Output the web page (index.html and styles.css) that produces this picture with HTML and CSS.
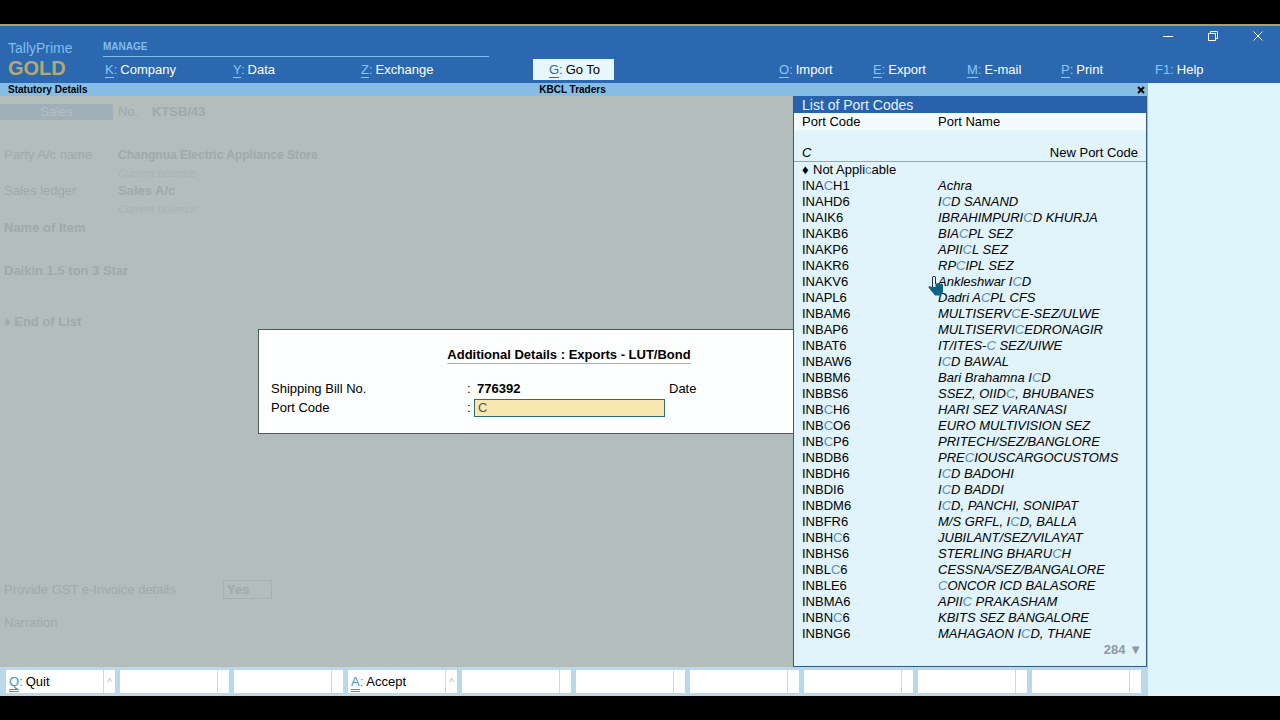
FILE: index.html
```html
<!DOCTYPE html>
<html lang="en">
<head>
    <meta charset="UTF-8">
    <meta name="viewport" content="width=device-width, initial-scale=1.0">
    <title>TallyPrime - Statutory Details</title>
    <link rel="stylesheet" href="styles.css">
</head>
<body>

<!-- Top Menu -->
<header class="top-bar">
    <div class="brand">
        <span class="brand-name">TallyPrime</span>
        <span class="brand-edition">GOLD</span>
    </div>
    <div class="manage">
        <span class="manage-title">MANAGE</span>
        <nav class="menu manage-menu">
            <a href="#"><b><u>K</u>:</b>Company</a>
            <a href="#"><b><u>Y</u>:</b>Data</a>
            <a href="#"><b><u>Z</u>:</b>Exchange</a>
        </nav>
    </div>
    <div class="goto">
        <button class="goto-button"><b><u>G</u>:</b>Go To</button>
    </div>
    <div class="tools">
        <div class="window-buttons">
            <button aria-label="Minimize"><svg width="12" height="12" viewBox="0 0 12 12"><path d="M1 6.5h10"/></svg></button>
            <button aria-label="Restore"><svg width="12" height="12" viewBox="0 0 12 12"><path d="M1.500 3.500h7v7h-7zM3.500 3.500v-2h7v7h-2"/></svg></button>
            <button aria-label="Close"><svg width="12" height="12" viewBox="0 0 12 12"><path d="M1.500 1.500l9 9M10.500 1.500l-9 9"/></svg></button>
        </div>
        <nav class="menu tools-menu">
            <a href="#"><b><u>O</u>:</b>Import</a>
            <a href="#"><b><u>E</u>:</b>Export</a>
            <a href="#"><b><u>M</u>:</b>E-mail</a>
            <a href="#"><b><u>P</u>:</b>Print</a>
            <a href="#"><b>F1:</b>Help</a>
        </nav>
    </div>
</header>

<div class="content">
    <main class="main">
        <!-- Title Strip -->
        <div class="title-strip">
            <span>Statutory Details</span>
            <span class="company">KBCL Traders</span>
            <button class="strip-close" aria-label="Close"><svg width="8" height="8" viewBox="0 0 8 8"><path d="M1 1l6 6M7 1l-6 6"/></svg></button>
        </div>

        <div class="workspace">
            <!-- Voucher behind the dialog -->
            <section class="voucher">
                <div class="voucher-head">
                    <span class="voucher-type">Sales</span>
                    <span class="voucher-no">No.</span>
                    <b>KTSB/43</b>
                </div>
                <div class="voucher-row party"><span>Party A/c name</span><b>Changnua Electric Appliance Store</b></div>
                <div class="voucher-row sub"><span></span><i>Current balance</i></div>
                <div class="voucher-row"><span>Sales ledger</span><b>Sales A/c</b></div>
                <div class="voucher-row sub"><span></span><i>Current balance</i></div>
                <b class="voucher-line">Name of Item</b>
                <b class="voucher-line item">Daikin 1.5 ton 3 Star</b>
                <b class="voucher-line end">&#9830; End of List</b>
                <div class="voucher-foot">
                    <div class="invoice"><label for="einvoice">Provide GST e-Invoice details</label><input id="einvoice" type="text" value="Yes"></div>
                    <div>Narration</div>
                </div>
            </section>

            <!-- Export Details Dialog -->
            <form class="dialog">
                <h1>Additional Details : Exports - LUT/Bond</h1>
                <div class="field">
                    <label for="bill">Shipping Bill No.</label><span>:</span>
                    <input id="bill" class="bill" type="text" value="776392">
                    <span>Date</span>
                </div>
                <div class="field">
                    <label for="port">Port Code</label><span>:</span>
                    <input id="port" class="port" type="text" value="C">
                </div>
            </form>

            <!-- Port Code List -->
            <aside class="port-list">
                <h2>List of Port Codes</h2>
                <table>
                    <thead>
                        <tr><th>Port Code</th><th>Port Name</th></tr>
                    </thead>
                    <tbody>
                        <tr class="search-row"><td><i>C</i></td><td><a href="#">New Port Code</a></td></tr>
                    </tbody>
                    <tbody id="ports"></tbody>
                </table>
                <div class="more">284 <span>&#9660;</span></div>
                <svg class="pointer" width="18" height="22" viewBox="0 0 18 22">
                    <path fill="#e2f3fb" stroke="#17323f" stroke-width="1" d="M4.500 13V2q1.500-1.500 3 0v7"/>
                    <path fill="#0e6483" d="M4 12l-3-1-.5 1.500L5 18l2 2.500h6l2-3.500V9.500l-1.500-1-1.500.5-1.500-1-1.500.5L7.500 8v4z"/>
                </svg>
            </aside>
        </div>

        <!-- Bottom Buttons -->
        <footer class="bottom-bar">
            <button><span><b><u>Q</u>:</b>Quit</span><i>^</i></button>
            <button><span></span><i></i></button>
            <button><span></span><i></i></button>
            <button><span><b><u>A</u>:</b>Accept</span><i>^</i></button>
            <button><span></span><i></i></button>
            <button><span></span><i></i></button>
            <button><span></span><i></i></button>
            <button><span></span><i></i></button>
            <button><span></span><i></i></button>
            <button><span></span><i></i></button>
        </footer>
    </main>
    <div class="side-panel"></div>
</div>

<script>
    var ports = [
        ['INACH1', 'Achra'],
        ['INAHD6', 'ICD SANAND'],
        ['INAIK6', 'IBRAHIMPURICD KHURJA'],
        ['INAKB6', 'BIACPL SEZ'],
        ['INAKP6', 'APIICL SEZ'],
        ['INAKR6', 'RPCIPL SEZ'],
        ['INAKV6', 'Ankleshwar ICD'],
        ['INAPL6', 'Dadri ACPL CFS'],
        ['INBAM6', 'MULTISERVCE-SEZ/ULWE'],
        ['INBAP6', 'MULTISERVICEDRONAGIR'],
        ['INBAT6', 'IT/ITES-C SEZ/UIWE'],
        ['INBAW6', 'ICD BAWAL'],
        ['INBBM6', 'Bari Brahamna ICD'],
        ['INBBS6', 'SSEZ, OIIDC, BHUBANES'],
        ['INBCH6', 'HARI SEZ VARANASI'],
        ['INBCO6', 'EURO MULTIVISION SEZ'],
        ['INBCP6', 'PRITECH/SEZ/BANGLORE'],
        ['INBDB6', 'PRECIOUSCARGOCUSTOMS'],
        ['INBDH6', 'ICD BADOHI'],
        ['INBDI6', 'ICD BADDI'],
        ['INBDM6', 'ICD, PANCHI, SONIPAT'],
        ['INBFR6', 'M/S GRFL, ICD, BALLA'],
        ['INBHC6', 'JUBILANT/SEZ/VILAYAT'],
        ['INBHS6', 'STERLING BHARUCH'],
        ['INBLC6', 'CESSNA/SEZ/BANGALORE'],
        ['INBLE6', 'CONCOR ICD BALASORE'],
        ['INBMA6', 'APIIC PRAKASHAM'],
        ['INBNC6', 'KBITS SEZ BANGALORE'],
        ['INBNG6', 'MAHAGAON ICD, THANE']
    ];

    function highlight(text) {
        return text.replace(/c/i, '<mark>$&</mark>');
    }

    function loadPorts() {
        var html = '<tr><td colspan="2"><span class="diamond">&#9830;</span>' + highlight('Not Applicable') + '</td></tr>';
        ports.forEach(function(port) {
            var code = highlight(port[0]);
            // The name is marked only when the code has no match
            var name = code === port[0] ? highlight(port[1]) : port[1];
            html += '<tr><td>' + code + '</td><td><i>' + name + '</i></td></tr>';
        });
        document.getElementById('ports').innerHTML = html;
    }

    loadPorts();
</script>

</body>
</html>
```
FILE: styles.css
```css
* {
    box-sizing: border-box;
}

body {
    margin: 0;
    padding: 24px 0;
    min-height: 100vh;
    display: flex;
    flex-direction: column;
    background-color: #000;
    font-family: "Liberation Sans", Arial, sans-serif;
    font-size: 13px;
    line-height: 16px;
    color: #000;
}

a {
    color: inherit;
    text-decoration: none;
}

button,
input {
    font: inherit;
    color: inherit;
    border: none;
    border-radius: 0;
    padding: 0;
    background: none;
}

/* Top Menu */
.top-bar {
    display: grid;
    grid-template-columns: 95px 386fr 290fr 501fr;
    height: 59px;
    padding-left: 8px;
    border-top: 2px solid #a8a070;
    background-color: #2b68b0;
    color: #fff;
}

.brand {
    display: flex;
    flex-direction: column;
    padding-top: 14px;
}

.brand-name {
    font-size: 14px;
    color: #80bdf0;
}

.brand-edition {
    font-size: 20px;
    line-height: 24px;
    font-weight: bold;
    color: #b5a873;
}

.manage,
.goto,
.tools {
    display: flex;
    flex-direction: column;
    justify-content: flex-end;
    padding-bottom: 3px;
}

.manage-title {
    height: 18px;
    border-bottom: 1px solid #80bdf0;
    font-size: 10px;
    font-weight: bold;
    color: #80bdf0;
}

.menu {
    display: grid;
    height: 23px;
    padding-top: 2px;
    align-items: center;
}

.manage-menu {
    grid-template-columns: repeat(3, 1fr);
    padding-left: 2px;
}

.tools-menu {
    grid-template-columns: repeat(5, 94px);
}

.menu b,
.goto-button b,
.bottom-bar b {
    margin-right: 3px;
    font-weight: normal;
    color: #8cc6f5;
}

u {
    text-decoration: none;
    border-bottom: 1px solid currentColor;
}

.goto {
    align-items: flex-start;
    padding-left: 44px;
}

.goto-button {
    width: 81px;
    height: 21px;
    padding-left: 2px;
    background-color: #e8f7fd;
    color: #000;
}

.goto-button b {
    color: #2b68b0;
}

.window-buttons {
    display: flex;
    justify-content: flex-end;
    gap: 33px;
    padding-right: 16px;
    margin-bottom: 15px;
}

.window-buttons button {
    width: 12px;
    height: 12px;
}

.window-buttons svg {
    display: block;
    fill: none;
    stroke: #fff;
}

.content {
    flex: 1;
    display: flex;
}

.main {
    flex: 1;
    display: flex;
    flex-direction: column;
}

.side-panel {
    width: 132px;
    background-color: #def4fb;
}

/* Title Strip */
.title-strip {
    display: grid;
    grid-template-columns: 1fr auto 1fr;
    align-items: center;
    height: 13px;
    padding: 0 3px 0 8px;
    background-color: #86bde4;
    font-size: 10px;
    line-height: 13px;
    font-weight: bold;
}

.company {
    padding-right: 8px;
}

.strip-close {
    justify-self: end;
    width: 8px;
    height: 8px;
}

.strip-close svg {
    display: block;
    stroke: #000;
    stroke-width: 2;
}

.workspace {
    flex: 1;
    display: flex;
    position: relative;
    background-color: #b3bdbb;
}

/* Voucher */
.voucher {
    flex: 1;
    display: flex;
    flex-direction: column;
    padding-top: 8px;
    color: #9faaa9;
}

.voucher-head {
    display: flex;
}

.voucher-type {
    width: 113px;
    margin-right: 5px;
    text-align: center;
    background-color: #a0afb8;
    color: #b3bfc2;
}

.voucher-no {
    width: 34px;
}

.voucher-row {
    display: grid;
    grid-template-columns: 114px 1fr;
    padding-left: 4px;
    line-height: 20px;
}

.party {
    margin-top: 25px;
}

.party b {
    font-size: 12px;
}

.sub {
    font-size: 11px;
    line-height: 16px;
    color: #a9b4b2;
}

.voucher-line {
    padding-left: 4px;
    margin-top: 3px;
}

.item {
    margin-top: 27px;
}

.end {
    margin-top: 35px;
}

.voucher-foot {
    display: flex;
    flex-direction: column;
    gap: 16px;
    margin-top: auto;
    padding: 0 0 36px 4px;
}

.invoice {
    display: flex;
    align-items: center;
}

.invoice label {
    width: 219px;
}

.invoice input {
    width: 49px;
    height: 19px;
    padding-left: 3px;
    border: 1px solid #a6b0ae;
    font-weight: bold;
}

/* Export Details Dialog */
.dialog {
    position: absolute;
    top: 233px;
    left: 258px;
    right: 354px;
    height: 105px;
    padding: 17px 0 0 12px;
    border: 1px solid #4d5957;
    border-right: none;
    background-color: #fdfefe;
}

.dialog h1 {
    width: fit-content;
    margin: 0 auto 16px;
    padding-left: 73px;
    font-size: 13px;
    line-height: 16px;
    text-decoration: underline;
    text-decoration-color: #a9aeb0;
    text-underline-offset: 4px;
}

.field {
    display: grid;
    grid-template-columns: 196px 7px 191px 1fr;
    align-items: center;
    height: 19px;
}

.field input {
    height: 18px;
    padding-left: 3px;
}

.bill {
    font-weight: bold;
}

.field span:last-child {
    padding-left: 4px;
}

.port {
    border: 1px solid #2d6f70;
    background-color: #f9e9b1;
    color: #555;
}

/* Port Code List */
.port-list {
    position: relative;
    width: 354px;
    margin-right: 1px;
    padding-bottom: 8px;
    border: 1px solid #335a80;
    border-top: none;
    background-color: #e1f3fb;
}

.port-list h2 {
    height: 17px;
    margin: 0;
    padding-left: 8px;
    background-color: #2862ad;
    color: #e4f3fc;
    font-size: 14px;
    font-weight: normal;
    line-height: 18px;
}

.port-list table {
    width: 100%;
    border-collapse: collapse;
    table-layout: fixed;
}

.port-list th,
.port-list td {
    height: 16px;
    padding: 0 0 0 8px;
    text-align: left;
    font-weight: normal;
    white-space: nowrap;
}

.port-list th {
    padding-top: 1px;
}

.port-list th:first-child {
    width: 136px;
}

.port-list thead {
    background-color: #f3fbfe;
}

.port-list .search-row td {
    height: 31px;
    padding-right: 8px;
    vertical-align: bottom;
    border-bottom: 1px solid #9aa5ab;
}

.port-list .search-row td:last-child {
    text-align: right;
}

mark {
    background: none;
    color: #5b8fbd;
}

.diamond {
    display: inline-block;
    width: 11px;
    line-height: 14px;
}

.more {
    padding-right: 4px;
    text-align: right;
    font-weight: bold;
    color: #8b9ba5;
}

.pointer {
    position: absolute;
    top: 179px;
    left: 134px;
}

/* Bottom Buttons */
.bottom-bar {
    display: grid;
    grid-template-columns: repeat(10, 1fr);
    gap: 5px;
    height: 29px;
    padding: 3px 7px 3px 6px;
    background-color: #b9d9ea;
}

.bottom-bar button {
    display: flex;
    align-items: center;
    background-color: #fff;
    text-align: left;
}

.bottom-bar span {
    flex: 1;
    padding-left: 3px;
}

.bottom-bar i {
    width: 12px;
    height: 23px;
    border-left: 1px solid #d2d6d8;
    font-size: 10px;
    font-style: normal;
    line-height: 26px;
    text-align: center;
    color: #b5bcc0;
}

.bottom-bar b {
    color: #4595be;
}

.bottom-bar u {
    border-bottom: 3px double currentColor;
}
```
